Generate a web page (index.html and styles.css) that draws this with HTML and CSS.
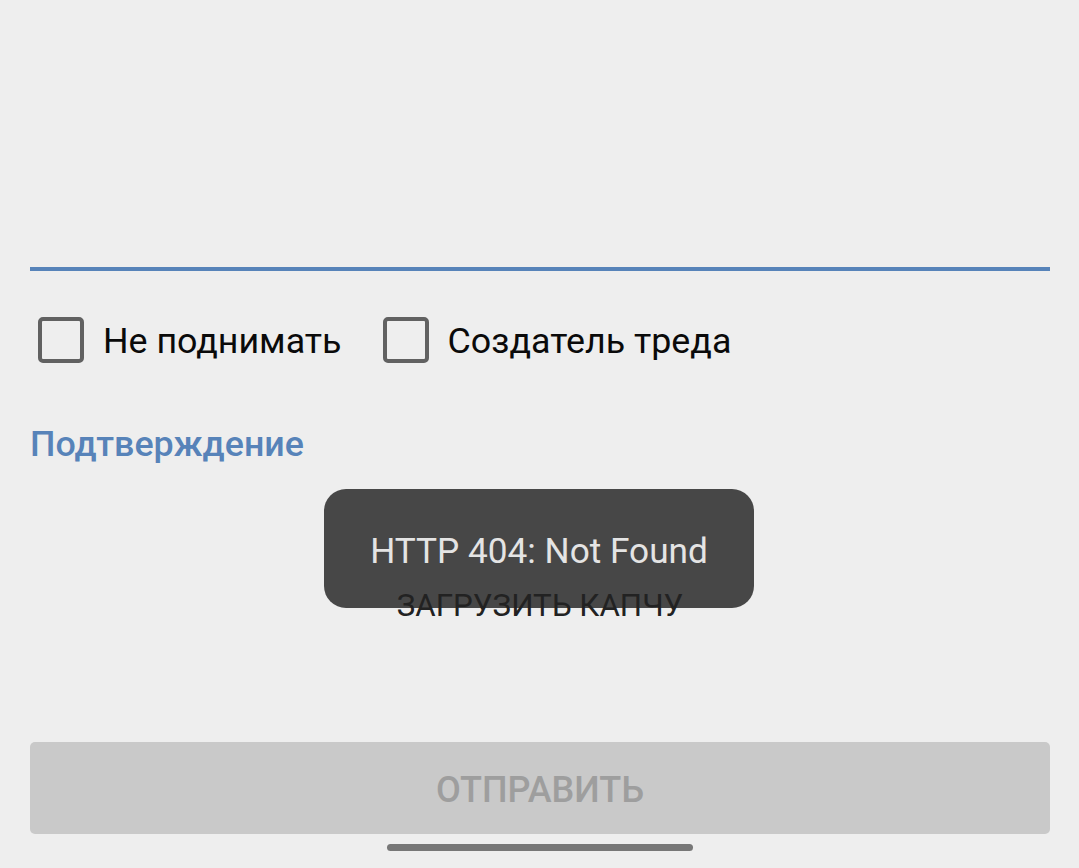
FILE: index.html
```html
<!DOCTYPE html>
<html lang="ru">
<head>
<meta charset="utf-8">
<link rel="stylesheet" href="styles.css">
</head>
<body>
<div class="screen">
  <div class="field-line"></div>
  <div class="checks">
    <label class="check"><span class="box"></span><span class="check-text">Не поднимать</span></label>
    <label class="check"><span class="box"></span><span class="check-text">Создатель треда</span></label>
  </div>
  <div class="section-title">Подтверждение</div>
  <div class="captcha-btn">ЗАГРУЗИТЬ КАПЧУ</div>
  <div class="submit">ОТПРАВИТЬ</div>
  <div class="home-wrap"><div class="home-bar"></div></div>
  <div class="toast">HTTP 404: Not Found</div>
</div>
</body>
</html>
```
FILE: styles.css
```css
html, body {
  margin: 0;
  padding: 0;
  background: #eeeeee;
}
body {
  font-family: Roboto, "Noto Sans", sans-serif;
}
.screen {
  position: relative;
  width: 1079px;
  height: 868px;
  padding: 267px 29px 0 30px;
  box-sizing: border-box;
  overflow: hidden;
}
.field-line {
  height: 4px;
  background: #5783b9;
}
.checks {
  display: flex;
  align-items: center;
  gap: 41px;
  margin-top: 46px;
  height: 46px;
  padding-left: 8px;
}
.check {
  display: flex;
  align-items: center;
  gap: 19px;
}
.box {
  width: 46px;
  height: 46px;
  box-sizing: border-box;
  border: 4.5px solid #616161;
  border-radius: 5px;
}
.check-text {
  font-size: 35.8px;
  color: #0a0a0a;
  line-height: 46px;
  position: relative;
  top: 1px;
}
.section-title {
  margin-top: 61px;
  font-size: 35.8px;
  line-height: 40px;
  font-weight: 500;
  color: #5783b9;
}
.captcha-btn {
  position: relative;
  z-index: 2;
  margin-top: 122px;
  text-align: center;
  font-size: 31.3px;
  line-height: 40px;
  color: #222222;
}
.submit {
  margin-top: 116px;
  height: 92px;
  background: #c9c9c9;
  border-radius: 5px;
  display: flex;
  align-items: center;
  justify-content: center;
  padding-top: 3px;
  box-sizing: border-box;
  font-size: 36px;
  font-weight: 500;
  color: #9e9e9e;
}
.home-wrap {
  display: flex;
  justify-content: center;
  margin-top: 10px;
}
.home-bar {
  width: 306px;
  height: 7px;
  border-radius: 4px;
  background: #777777;
}
.toast {
  position: absolute;
  z-index: 1;
  left: 324px;
  top: 489px;
  width: 430px;
  height: 119px;
  border-radius: 22px;
  background: #474747;
  color: #e4e4e4;
  font-size: 35.2px;
  display: flex;
  align-items: center;
  justify-content: center;
  padding-top: 4px;
  box-sizing: border-box;
}
```
